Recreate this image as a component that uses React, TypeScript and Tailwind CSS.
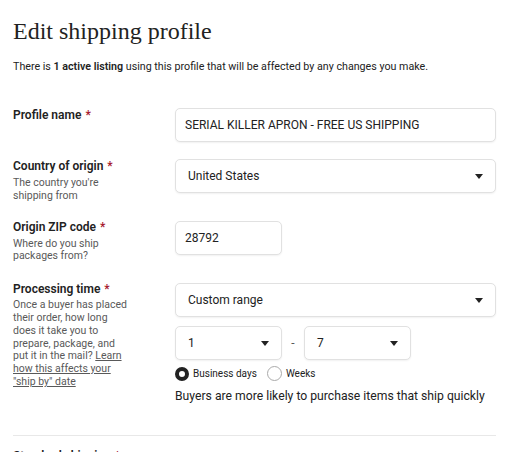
import React from "react";

const Caret = () => (
  <svg width="8" height="5" viewBox="0 0 8 5" className="shrink-0">
    <path d="M0 0 H8 L4 5 Z" fill="#222" />
  </svg>
);

const Req = () => <span className="text-[#a61a2e] ml-[4px]">*</span>;

const box = "h-[34px] border border-[#e1e1e1] rounded-[5px] shadow-[0_1px_2px_rgba(0,0,0,0.06)] flex items-center text-[12px] bg-white";

const Line = ({ children }: { children: React.ReactNode }) => <div className="whitespace-nowrap">{children}</div>;

export default function App() {
  return (
    <div className="w-[513px] h-[452px] overflow-hidden bg-white text-[#222] pl-[13px] pr-[17px]" style={{ fontFamily: "Roboto, 'Noto Sans', sans-serif" }}>
      <h1 className="pt-[16px] text-[24px] leading-[30px] text-[#222]" style={{ fontFamily: "'Liberation Serif', serif" }}>
        Edit shipping profile
      </h1>
      <p className="mt-[14px] text-[10.7px] leading-[14px] text-[#222]">
        There is <span className="font-semibold">1 active listing</span> using this profile that will be affected by any changes you make.
      </p>

      {/* Profile name */}
      <div className="mt-[34px] flex items-start">
        <div className="w-[162px] -mt-[1px]">
          <div className="text-[12px] font-semibold leading-[16px]">Profile name<Req /></div>
        </div>
        <div className={`flex-1 ${box} px-[9px]`}>
          SERIAL KILLER APRON - FREE US SHIPPING
        </div>
      </div>

      {/* Country */}
      <div className="mt-[17px] flex items-start">
        <div className="w-[162px] -mt-[1px]">
          <div className="text-[12px] font-semibold leading-[16px]">Country of origin<Req /></div>
          <div className="mt-[3px] text-[10.5px] leading-[12.8px] text-[#595959]">
            <Line>The country you're</Line>
            <Line>shipping from</Line>
          </div>
        </div>
        <div className={`flex-1 ${box} justify-between pl-[12px] pr-[12px]`}>
          <span>United States</span>
          <Caret />
        </div>
      </div>

      {/* ZIP */}
      <div className="mt-[18px] flex items-start">
        <div className="w-[162px] -mt-[2px]">
          <div className="text-[12px] font-semibold leading-[16px]">Origin ZIP code<Req /></div>
          <div className="mt-[3px] text-[10.5px] leading-[12.8px] text-[#595959]">
            <Line>Where do you ship</Line>
            <Line>packages from?</Line>
          </div>
        </div>
        <div className={`w-[107px] ${box} px-[9px]`}>
          28792
        </div>
      </div>

      {/* Processing time */}
      <div className="mt-[20px] flex items-start">
        <div className="w-[162px] -mt-[2px]">
          <div className="text-[12px] font-semibold leading-[16px]">Processing time<Req /></div>
          <div className="mt-[2px] text-[10.5px] leading-[12.8px] text-[#595959]">
            <Line>Once a buyer has placed</Line>
            <Line>their order, how long</Line>
            <Line>does it take you to</Line>
            <Line>prepare, package, and</Line>
            <Line>put it in the mail? <span className="underline">Learn</span></Line>
            <Line><span className="underline">how this affects your</span></Line>
            <Line><span className="underline">"ship by" date</span></Line>
          </div>
        </div>
        <div className="flex-1">
          <div className={`h-[33px] ${box} justify-between pl-[12px] pr-[12px]`}>
            <span>Custom range</span>
            <Caret />
          </div>
          <div className="mt-[9px] flex items-center">
            <div className={`w-[107px] ${box} justify-between pl-[12px] pr-[12px]`}>
              <span>1</span>
              <Caret />
            </div>
            <span className="w-[22px] text-center text-[12px] text-[#595959]">-</span>
            <div className={`w-[107px] ${box} justify-between pl-[12px] pr-[12px]`}>
              <span>7</span>
              <Caret />
            </div>
          </div>
          <div className="mt-[6px] flex items-center text-[10px] leading-[14px]">
            <span className="w-[14px] h-[14px] rounded-full border-[4px] border-[#222] bg-white box-border" />
            <span className="ml-[4px]">Business days</span>
            <span className="ml-[10px] w-[15px] h-[15px] rounded-full border border-[#aaa] bg-white" />
            <span className="ml-[4px]">Weeks</span>
          </div>
          <div className="mt-[7px] text-[12.2px] leading-[16px] whitespace-nowrap">
            Buyers are more likely to purchase items that ship quickly
          </div>
        </div>
      </div>

      <div className="mt-[31px] h-px bg-[#e8e8e8]" />
      <div className="mt-[12px] text-[12px] font-semibold leading-[16px]">Standard shipping<Req /></div>
    </div>
  );
}
